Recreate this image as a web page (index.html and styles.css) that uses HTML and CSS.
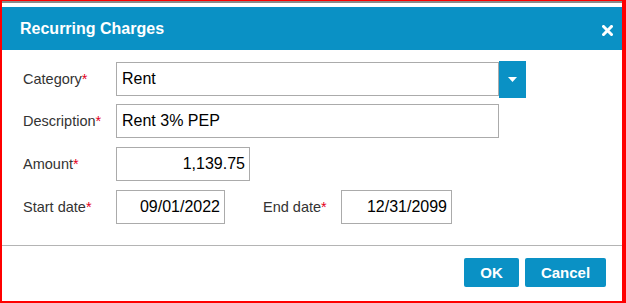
FILE: index.html
```html
<!DOCTYPE html>
<html lang="en">
<head>
    <meta charset="UTF-8">
    <title>Recurring Charges</title>
    <link rel="stylesheet" href="styles.css">
</head>
<body>

    <div class="frame">
        <div class="backdrop"></div>
        <div class="dialog">
            <div class="dialog-header">
                <span class="dialog-title">Recurring Charges</span>
                <svg class="close-icon" width="11" height="11" viewBox="0 0 11 11">
                    <path d="M1.5 1.5 L9.5 9.5 M9.5 1.5 L1.5 9.5" stroke="#fff" stroke-width="3" stroke-linecap="square"/>
                </svg>
            </div>

            <form class="dialog-body">
                <div class="row">
                    <label class="field-label">Category<span class="req">*</span></label>
                    <div class="select-wrap">
                        <div class="field field-wide">Rent</div>
                        <div class="select-btn">
                            <svg width="9" height="5" viewBox="0 0 9 5"><path d="M0 0 H9 L4.5 5 Z" fill="#fff"/></svg>
                        </div>
                    </div>
                </div>
                <div class="row">
                    <label class="field-label">Description<span class="req">*</span></label>
                    <div class="field field-wide">Rent 3% PEP</div>
                </div>
                <div class="row">
                    <label class="field-label">Amount<span class="req">*</span></label>
                    <div class="field field-amount">1,139.75</div>
                </div>
                <div class="row">
                    <label class="field-label">Start date<span class="req">*</span></label>
                    <div class="field field-date">09/01/2022</div>
                    <label class="field-label end-label">End date<span class="req">*</span></label>
                    <div class="field field-date end-date">12/31/2099</div>
                </div>
            </form>

            <div class="dialog-footer">
                <button class="btn btn-ok">OK</button>
                <button class="btn btn-cancel">Cancel</button>
            </div>
        </div>
    </div>

</body>
</html>
```

FILE: styles.css
```css
html, body {
    margin: 0;
    padding: 0;
    background: #fff;
}

body {
    font-family: "Liberation Sans", Arial, sans-serif;
    width: 626px;
    height: 303px;
    overflow: hidden;
}

.frame {
    box-sizing: border-box;
    width: 626px;
    height: 303px;
    border: 2px solid #f00;
    border-top-width: 1px;
    border-right-width: 4px;
    display: flex;
    flex-direction: column;
}

.backdrop {
    height: 6px;
    border-top: 2px solid #8a8a8a;
    box-sizing: border-box;
    background: #fff;
}

.dialog {
    flex: 1;
    display: flex;
    flex-direction: column;
    background: #fff;
}

.dialog-header {
    height: 43px;
    background-color: #0a91c5;
    display: flex;
    align-items: center;
    justify-content: space-between;
    padding: 0 9px 0 18px;
}

.dialog-title {
    color: #fff;
    font-weight: bold;
    font-size: 16px;
    margin-top: 1px;
}

.close-icon {
    margin-top: 3px;
}

.dialog-body {
    padding: 11px 0 0 21px;
    display: flex;
    flex-direction: column;
    gap: 7px;
    height: 195px;
    box-sizing: border-box;
}

.row {
    display: flex;
    align-items: center;
    height: 36px;
}

.row + .row {
    height: 34px;
}

.row:nth-child(3),
.row:nth-child(4) {
    margin-top: 2px;
}

.field-label {
    width: 93px;
    font-size: 14.5px;
    color: #333;
}

.req {
    color: #e3001b;
}

.select-wrap {
    display: flex;
    align-items: center;
}

.field {
    box-sizing: border-box;
    height: 34px;
    border: 1px solid #ababab;
    font-size: 16px;
    color: #000;
    display: flex;
    align-items: center;
    padding: 0 5px;
    background: #fff;
}

.field-wide {
    width: 383px;
}

.select-btn {
    width: 27px;
    height: 37px;
    background-color: #0a91c5;
    display: flex;
    align-items: center;
    justify-content: center;
}

.field-amount {
    width: 134px;
    justify-content: flex-end;
    padding-right: 4px;
}

.field-date {
    width: 109px;
    justify-content: flex-end;
    padding-right: 4px;
}

.end-label {
    width: 78px;
    margin-left: 38px;
}

.end-date {
    width: 111px;
}

.dialog-footer {
    border-top: 1px solid #b4b4b4;
    display: flex;
    justify-content: flex-end;
    gap: 6px;
    padding: 12px 16px 0 0;
}

.btn {
    height: 29px;
    border: none;
    border-radius: 2px;
    background-color: #0a91c5;
    color: #fff;
    font-family: "Liberation Sans", Arial, sans-serif;
    font-weight: bold;
    font-size: 15px;
    padding: 0;
    cursor: pointer;
}

.btn-ok {
    width: 55px;
}

.btn-cancel {
    width: 81px;
}
```
